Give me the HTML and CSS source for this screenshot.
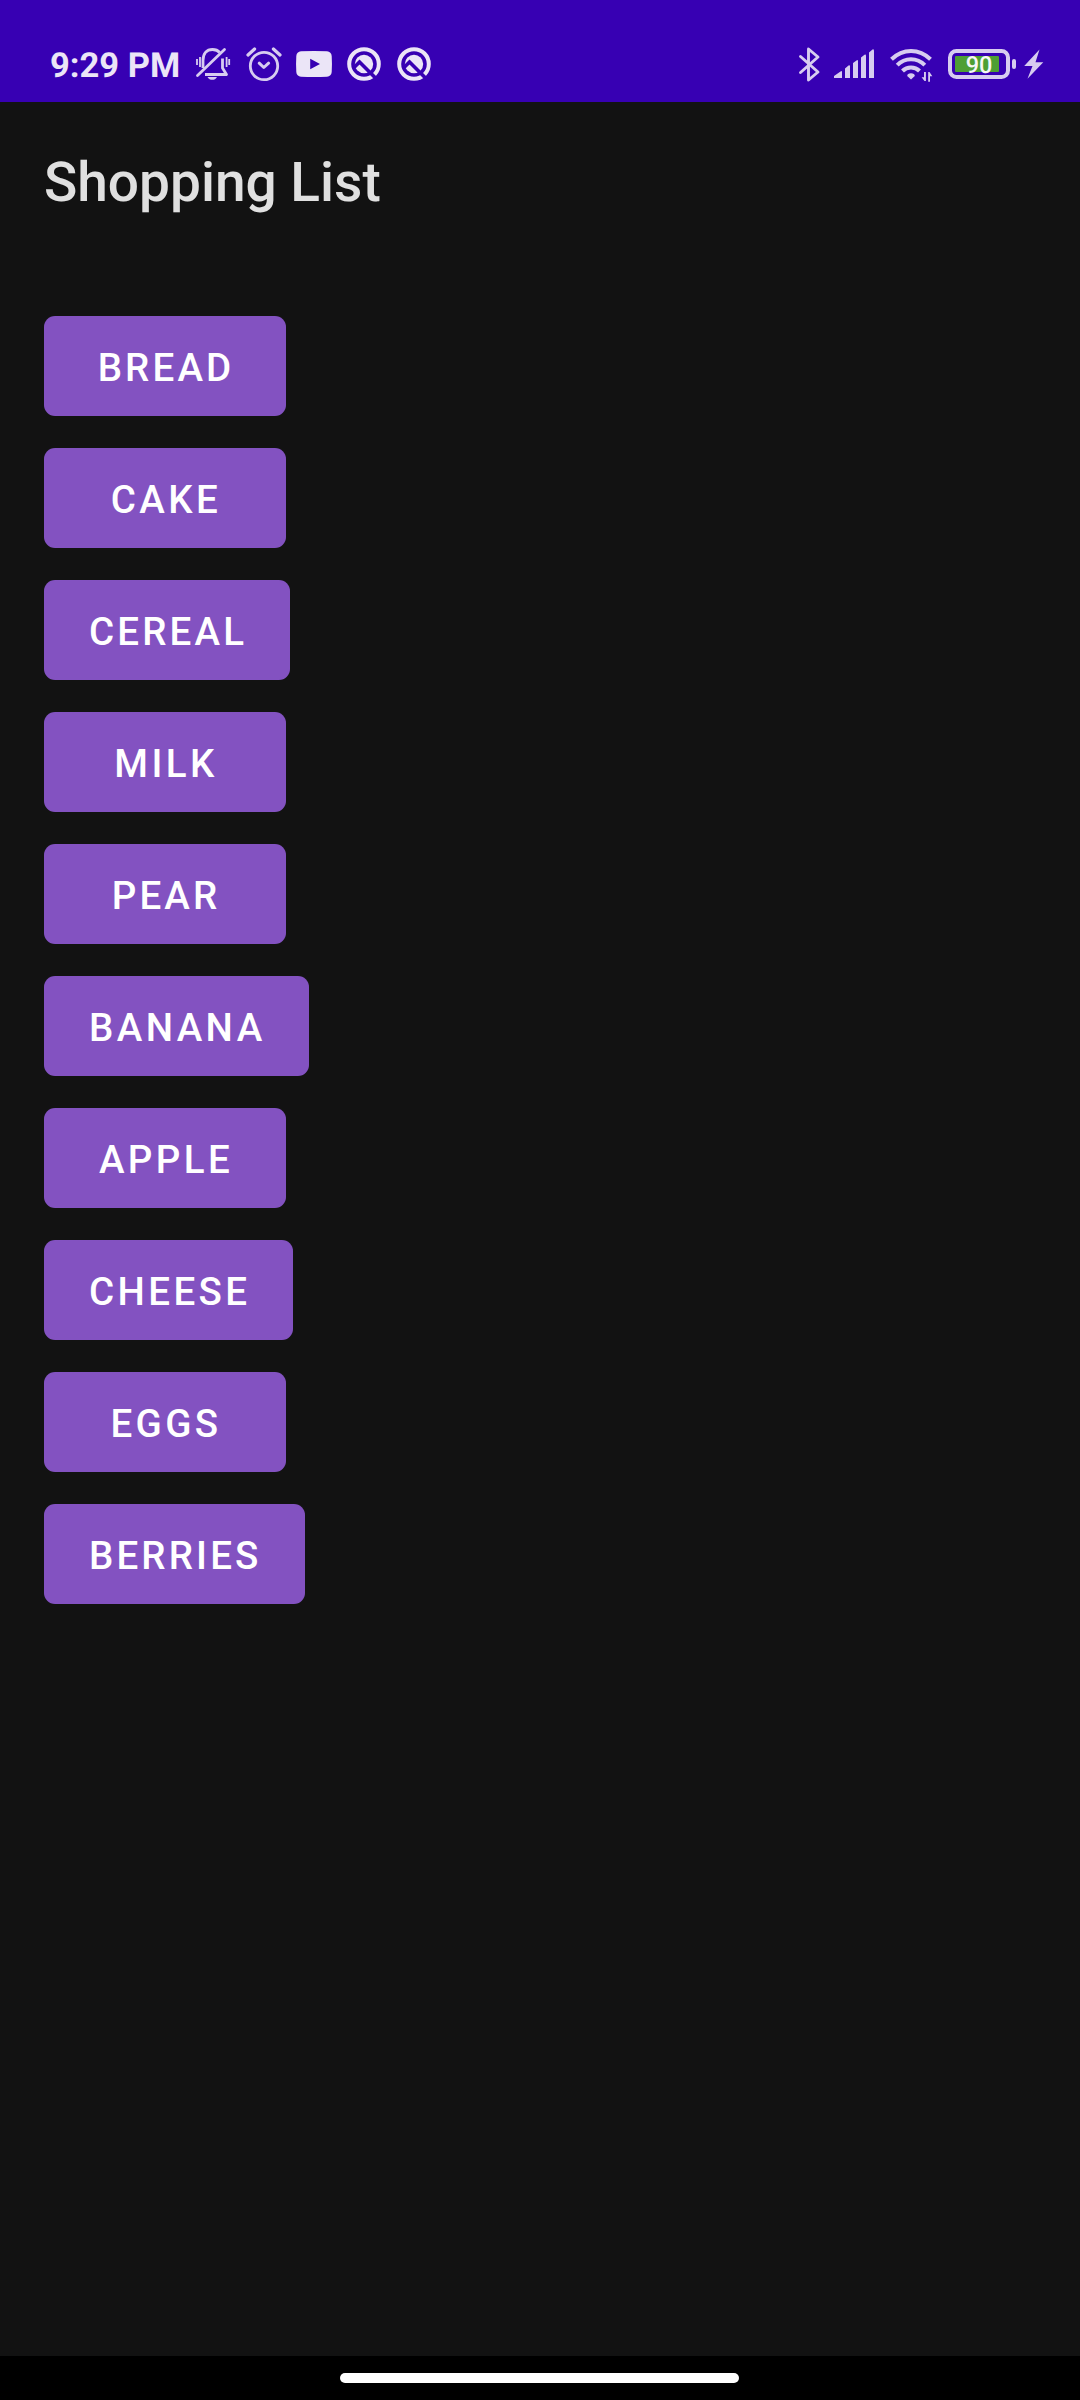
FILE: index.html
```html
<!DOCTYPE html>
<html lang="en">
<head>
<meta charset="utf-8">
<title>Shopping List</title>
<link rel="stylesheet" href="styles.css">
</head>
<body>
<div class="screen">
  <header class="status-bar">
    <div class="status-left">
      <span class="clock">9:29 PM</span>
      <svg class="icon soft" width="36" height="36" viewBox="0 0 36 36" fill="none" stroke="currentColor" stroke-width="2.800">
        <path d="M8 22V14.500C8 7.500 11.500 3.500 17.500 3.500C20.500 3.500 23 4.500 24.700 6.500"/>
        <path d="M27.500 12.500V22L31.500 28.500H10" stroke-linejoin="round"/>
        <path d="M2.500 29.500L29.500 3.500" stroke-linecap="round"/>
        <path d="M2 13v6M34.200 13v6M5 11v10M31.600 11v10" stroke-width="1.800"/>
        <path d="M12.500 31h9.500c-2 3.800-7.500 3.800-9.500 0z" fill="currentColor" stroke="none"/>
      </svg>
      <svg class="icon alarm" width="36" height="36" viewBox="0 0 36 36" fill="none" stroke="currentColor" stroke-width="2.800" stroke-linecap="round">
        <circle cx="18" cy="20" r="13.700"/>
        <path d="M13.200 17.200l4.600 4.300l4.800-4.300" stroke-width="3" stroke-linejoin="round"/>
        <path d="M2 9L8.600 3M34 9L27.400 3" stroke-width="3.200"/>
      </svg>
      <svg class="icon video" width="36" height="36" viewBox="0 0 36 36">
        <path fill="currentColor" fill-rule="evenodd" d="M5 5.300Q18 4.700 31 5.300Q35.300 5.700 35.700 10Q36.200 18 35.700 26Q35.300 30.300 31 30.700Q18 31.300 5 30.700Q.7 30.300.3 26Q-.2 18 .3 10Q.7 5.700 5 5.300ZM14.200 12.800V23.200L24 18Z"/>
      </svg>
      <svg class="icon q" width="34" height="34" viewBox="0 0 34 34">
        <circle cx="17" cy="17" r="14.800" fill="none" stroke="currentColor" stroke-width="4"/>
        <circle cx="17" cy="17" r="9.200" fill="currentColor"/>
        <path class="cut" d="M7 20.500L12.500 15L31 33.500" fill="none" stroke-width="3.600"/>
      </svg>
      <svg class="icon q second" width="34" height="34" viewBox="0 0 34 34">
        <circle cx="17" cy="17" r="14.800" fill="none" stroke="currentColor" stroke-width="4"/>
        <circle cx="17" cy="17" r="9.200" fill="currentColor"/>
        <path class="cut" d="M7 20.500L12.500 15L31 33.500" fill="none" stroke-width="3.600"/>
      </svg>
    </div>
    <div class="status-right">
      <svg class="icon" width="22" height="36" viewBox="0 0 22 36" fill="none" stroke="currentColor" stroke-width="2.900" stroke-linejoin="round" stroke-linecap="round">
        <path d="M1.500 10.500L19 26L9.500 34V3L19 11L1.500 26.500"/>
      </svg>
      <svg class="icon signal" width="40" height="36" viewBox="0 0 40 36" fill="currentColor">
        <path d="M0 32V30L6.500 25.400Q8 24.500 8 26V32ZM11 32V22.500L14.500 19.600Q16 18.600 16 20.500V32ZM19 32V17L22.500 14.400Q24 13.500 24 15.500V32ZM27 32V11.500L30.500 8.800Q32 7.900 32 10V32ZM35 32V6.500L38.500 3.600Q40 2.700 40 5V32Z"/>
      </svg>
      <svg class="icon wifi" width="44" height="36" viewBox="0 0 44 36" fill="none" stroke="currentColor" stroke-width="4">
        <path d="M1.500 13.300Q10 5 21 5T40.500 13.300"/>
        <path d="M7.200 19.200Q13 13.300 21 13.300T34.800 19.200"/>
        <path d="M12.500 25Q16 21.400 21 21.400T29.500 25"/>
        <path d="M17.200 30Q17.300 27.300 21 27.300T24.800 30L21 33.500Z" fill="currentColor" stroke="none"/>
        <path d="M34 26h1.900v9H34.500L31.600 31.300H34ZM38.200 35.700V26H39.500L42.300 30.200H40V35.700Z" fill="currentColor" stroke="none"/>
      </svg>
      <svg class="icon battery" width="69" height="36" viewBox="0 0 69 36">
        <rect x="2" y="5" width="58" height="26" rx="6.500" fill="none" stroke="currentColor" stroke-width="4"/>
        <rect class="charge" x="7" y="10" width="44" height="16" rx="1"/>
        <rect x="64" y="13" width="4" height="10" rx="2" fill="currentColor"/>
        <text class="level" x="31" y="27" text-anchor="middle">90</text>
      </svg>
      <svg class="icon bolt" width="20" height="36" viewBox="0 0 20 36">
        <path fill="currentColor" d="M15.500 3.500L.2 20H8.500L3.500 32.800L19.300 16.300H11.500Z"/>
      </svg>
    </div>
  </header>
  <main class="content">
    <h1 class="title">Shopping List</h1>
    <div class="items">
      <button class="item snug">Bread</button>
      <button class="item">Cake</button>
      <button class="item snug">Cereal</button>
      <button class="item">Milk</button>
      <button class="item snug">Pear</button>
      <button class="item">Banana</button>
      <button class="item">Apple</button>
      <button class="item">Cheese</button>
      <button class="item">Eggs</button>
      <button class="item snug">Berries</button>
    </div>
  </main>
  <footer class="nav-bar"><div class="handle"></div></footer>
</div>
</body>
</html>
```
FILE: styles.css
```css
* { box-sizing: border-box; }
body {
  margin: 0;
  background: #121212;
  font-family: Roboto, "Noto Sans", sans-serif;
  text-rendering: geometricPrecision;
}
.screen {
  display: flex;
  flex-direction: column;
  width: 1080px;
  height: 2400px;
  background: #121212;
}
.status-bar {
  display: flex;
  justify-content: space-between;
  height: 102px;
  padding: 46px 36px 0 50px;
  background: #3700b3;
  color: #ebe5f7;
}
.status-left, .status-right {
  display: flex;
  align-items: flex-start;
  height: 36px;
}
.status-right { color: #d7ccf0; }
.clock {
  width: 145px;
  font-size: 34.500px;
  font-weight: 700;
  line-height: 40px;
  white-space: nowrap;
}
.icon { display: block; flex: none; overflow: visible; }
.soft, .alarm { color: #d7ccf0; }
.alarm { margin-left: 15px; }
.video { margin-left: 14px; }
.q { margin: 1px 0 0 15px; }
.second { margin-left: 16px; }
.cut { stroke: #3700b3; }
.signal { margin-left: 13px; }
.wifi { margin-left: 16px; }
.battery { margin-left: 14px; }
.bolt { margin-left: 7px; }
.charge { fill: #4e9f34; }
.level { fill: #f7f7f7; font-size: 23.500px; font-weight: 500; }
.content { flex: 1; padding: 0 44px; }
.title {
  margin: 49px 0 0;
  color: #e0e0e0;
  font-size: 55px;
  font-weight: 500;
  line-height: 64px;
}
.items {
  display: flex;
  flex-direction: column;
  align-items: flex-start;
  gap: 32px;
  margin-top: 101px;
}
.item {
  min-width: 242px;
  height: 100px;
  padding: 3px 43px 0 45px;
  border: 0;
  border-radius: 11px;
  background: #8352c1;
  color: #fff;
  font: 500 38.500px/46px Roboto, "Noto Sans", sans-serif;
  letter-spacing: 3.400px;
  text-transform: uppercase;
}
.snug { letter-spacing: 3.150px; }
.nav-bar {
  display: flex;
  justify-content: center;
  height: 44px;
  padding: 17px 2px 0 0;
  background: #000;
}
.handle {
  width: 399px;
  height: 10px;
  border-radius: 5px;
  background: #fff;
}
```
